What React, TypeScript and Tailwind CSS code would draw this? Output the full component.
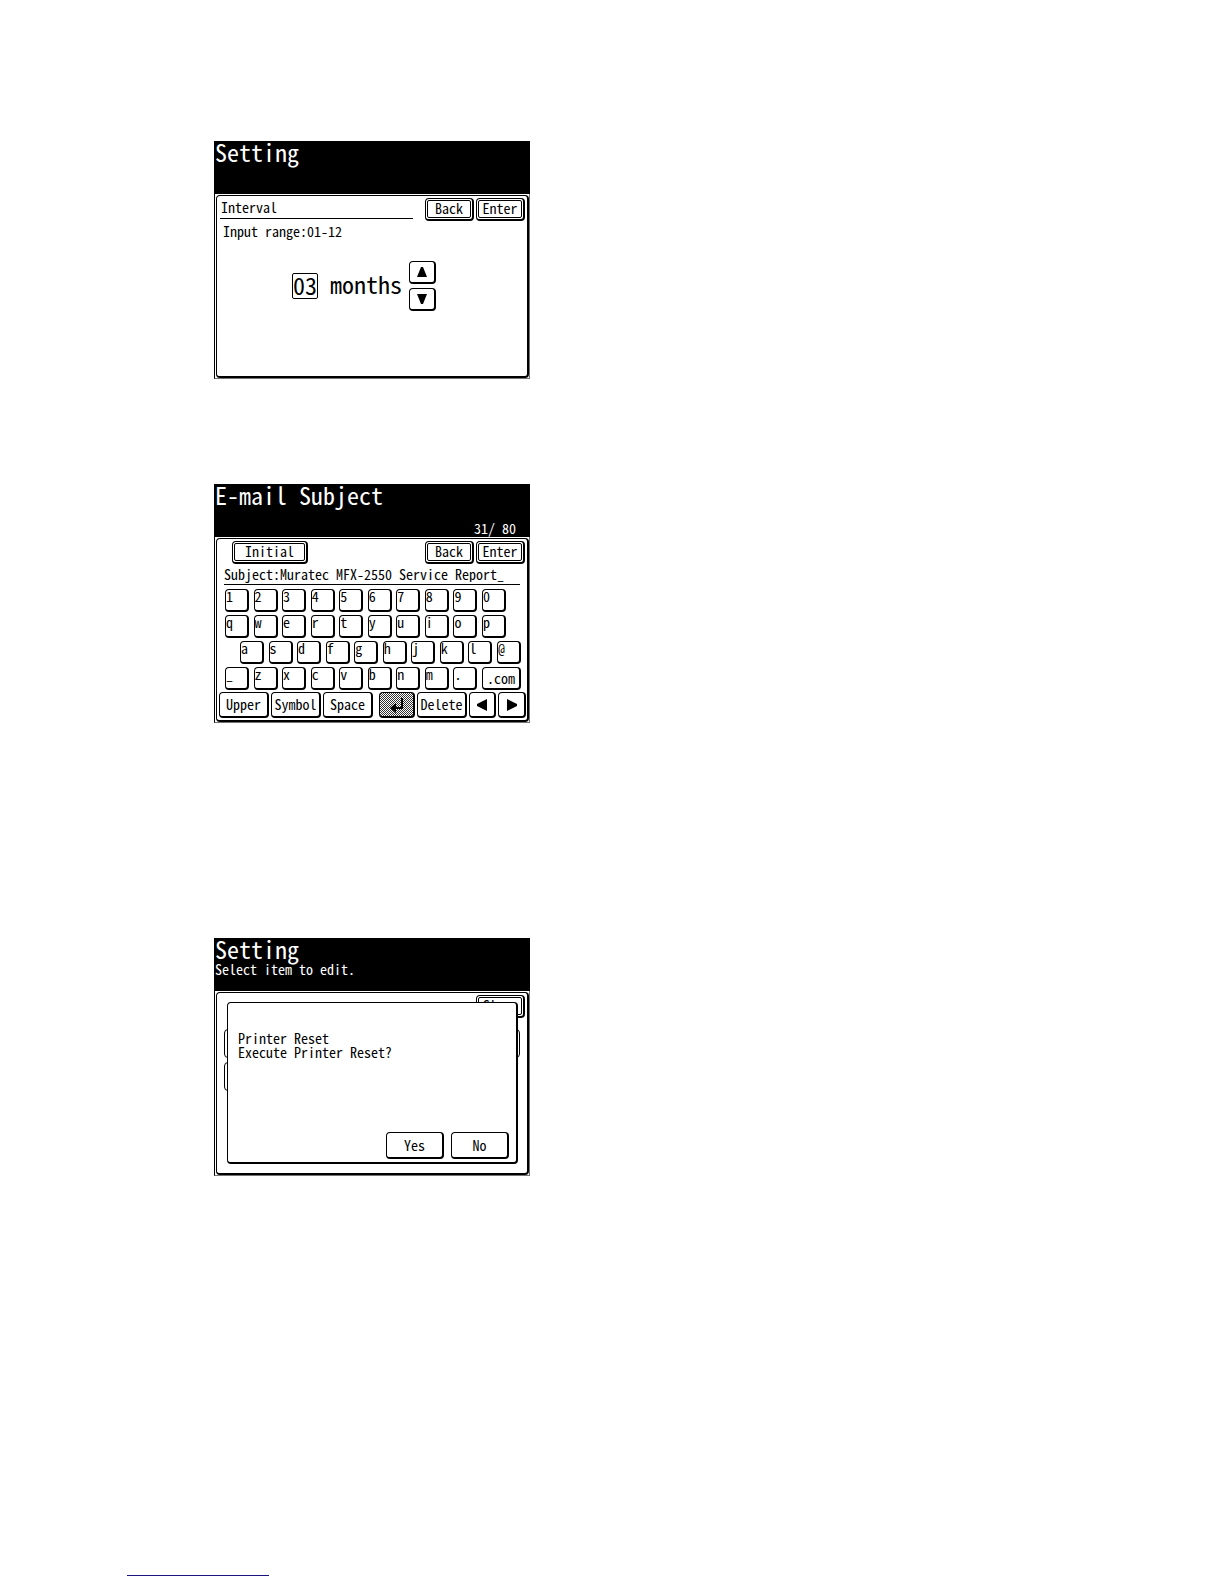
import type { ReactNode } from "react";

function Screen({
  title,
  subtitle,
  counter,
  children,
}: {
  title: string;
  subtitle?: string;
  counter?: string;
  children: ReactNode;
}) {
  return (
    <section className="w-full max-w-[316px] border-b border-l border-b-neutral-500 border-l-black bg-white">
      <header className="flex h-[53px] flex-col bg-black text-white">
        <h2 className="h-[24px] text-[24px] leading-[22px]">{title}</h2>
        {subtitle && <p className="leading-[14px]">{subtitle}</p>}
        {counter && <p className="mt-[12px] pr-[14px] text-right leading-[16px] whitespace-pre">{counter}</p>}
      </header>
      <div className="border-r border-neutral-500 pt-px pl-px">
        <div className="relative flex min-h-[183px] flex-col rounded-[4px] border border-r-2 border-b-2 border-black">
          {children}
        </div>
      </div>
    </section>
  );
}

function FramedButton({ children, wide }: { children: ReactNode; wide?: boolean }) {
  return (
    <button
      type="button"
      className={
        "flex h-[23px] rounded-[4px] border border-r-2 border-b-2 border-black bg-white p-px leading-[16px] " +
        (wide ? "w-[76px]" : "w-[49px]")
      }
    >
      <span className="flex h-full w-full items-center justify-center rounded-[2px] border border-black pb-[2px]">
        {children}
      </span>
    </button>
  );
}

const keyBase = "rounded-[4px] border border-r-2 border-b-2 border-black ";

function Key({ children }: { children: ReactNode }) {
  return (
    <button
      type="button"
      className={keyBase + "flex h-[23px] w-6 items-start justify-start bg-white leading-[12px]"}
    >
      {children}
    </button>
  );
}

function PlainButton({ children, className, label }: { children: ReactNode; className: string; label?: string }) {
  return (
    <button type="button" aria-label={label} className={keyBase + "flex items-center justify-center " + className}>
      {children}
    </button>
  );
}

function Triangle({ points }: { points: string }) {
  return (
    <svg className="shrink-0" width="12" height="12" viewBox="0 0 12 12" aria-hidden="true">
      <polygon points={points} fill="#000" />
    </svg>
  );
}

function IntervalScreen() {
  return (
    <Screen title="Setting">
      <div className="flex justify-between pt-[2px] pr-[2px] pl-[3px]">
        <h3 className="h-[21px] w-[193px] border-b border-black pl-px leading-[18px]">Interval</h3>
        <div className="flex gap-[2px]">
          <FramedButton>Back</FramedButton>
          <FramedButton>Enter</FramedButton>
        </div>
      </div>
      <p className="mt-[2px] pl-[6px] leading-[16px]">Input range:01-12</p>
      <div className="mt-[22px] flex items-center pl-[75px]">
        <input
          id="months"
          defaultValue="03"
          className="h-[26px] w-[26px] rounded-[2px] border border-black pb-[4px] text-center text-[24px] leading-[22px]"
        />
        <label htmlFor="months" className="w-[91px] pb-[4px] pl-[12px] text-[24px] leading-[24px]">
          months
        </label>
        <div className="flex flex-col gap-1">
          <PlainButton className="h-[23px] w-[27px] bg-white" label="Increase">
            <Triangle points="5,1 7,1 11,11 1,11" />
          </PlainButton>
          <PlainButton className="h-[23px] w-[27px] bg-white" label="Decrease">
            <Triangle points="5,11 7,11 11,1 1,1" />
          </PlainButton>
        </div>
      </div>
    </Screen>
  );
}

function SubjectScreen() {
  return (
    <Screen title="E-mail Subject" counter="31/ 80">
      <div className="flex justify-between pt-[2px] pr-[2px] pl-[15px]">
        <FramedButton wide>Initial</FramedButton>
        <div className="flex gap-[2px]">
          <FramedButton>Back</FramedButton>
          <FramedButton>Enter</FramedButton>
        </div>
      </div>
      <div className="mt-[2px] mr-[7px] ml-[7px] flex h-[19px] border-b border-black pb-[2px]">
        <label htmlFor="subject" className="leading-[16px]">
          Subject:
        </label>
        <input
          id="subject"
          defaultValue="Muratec MFX-2550 Service Report_"
          className="h-[16px] min-w-0 flex-1 leading-[16px]"
        />
      </div>
      <div className="mt-[4px] mr-[6px] ml-[8px] flex flex-col gap-[3px]">
        <div className="mr-[15px] flex justify-between">
          {"1234567890".split("").map((k) => (
            <Key key={k}>{k}</Key>
          ))}
        </div>
        <div className="mr-[15px] flex justify-between">
          {"qwertyuiop".split("").map((k) => (
            <Key key={k}>{k}</Key>
          ))}
        </div>
        <div className="ml-[15px] flex justify-between">
          {"asdfghjkl@".split("").map((k) => (
            <Key key={k}>{k}</Key>
          ))}
        </div>
        <div className="flex justify-between">
          {"_zxcvbnm.".split("").map((k) => (
            <Key key={k}>{k}</Key>
          ))}
          <PlainButton className="h-[23px] w-[39px] bg-white">.com</PlainButton>
        </div>
      </div>
      <div className="mt-[2px] mr-px mb-[2px] ml-[2px] flex justify-between">
        <div className="flex gap-[2px]">
          <PlainButton className="h-[26px] w-[50px] bg-white">Upper</PlainButton>
          <PlainButton className="h-[26px] w-[50px] bg-white">Symbol</PlainButton>
          <PlainButton className="h-[26px] w-[50px] bg-white">Space</PlainButton>
        </div>
        <div className="flex gap-[2px]">
          <PlainButton
            label="Return"
            className="h-[26px] w-[36px] bg-[repeating-conic-gradient(#333_0_25%,#fff_0_50%)] bg-[length:2px_2px]"
          >
            <svg className="shrink-0" width="16" height="16" viewBox="0 0 16 16" aria-hidden="true">
              <path d="M13 1V11H6" fill="none" stroke="#000" strokeWidth="2" />
              <polygon points="1,11 7,6 7,16" fill="#000" />
            </svg>
          </PlainButton>
          <PlainButton className="h-[26px] w-[50px] bg-white">Delete</PlainButton>
          <PlainButton className="h-[26px] w-[27px] bg-white" label="Left">
            <Triangle points="1,5 1,7 11,12 11,0" />
          </PlainButton>
          <PlainButton className="h-[26px] w-[28px] bg-white" label="Right">
            <Triangle points="11,5 11,7 1,12 1,0" />
          </PlainButton>
        </div>
      </div>
    </Screen>
  );
}

function ResetScreen() {
  return (
    <Screen title="Setting" subtitle="Select item to edit.">
      <div className="flex justify-end pt-[2px] pr-[2px]">
        <FramedButton>Close</FramedButton>
      </div>
      <div className="mt-[11px] mr-[7px] ml-[7px] flex flex-col gap-1">
        <div className="h-[29px] rounded-[4px] border border-black" />
        <div className="h-[29px] w-[140px] rounded-[4px] border border-black" />
      </div>
      <div
        role="dialog"
        aria-label="Printer Reset"
        className="absolute top-[9px] right-[9px] bottom-[9px] left-[10px] flex flex-col justify-between rounded-[4px] border border-r-2 border-b-2 border-black bg-white pt-[28px] pr-[7px] pb-[3px] pl-[10px]"
      >
        <p className="leading-[14px]">
          Printer Reset
          <br />
          Execute Printer Reset?
        </p>
        <div className="flex justify-end gap-[7px]">
          <PlainButton className="h-[27px] w-[58px] bg-white">Yes</PlainButton>
          <PlainButton className="h-[27px] w-[58px] bg-white">No</PlainButton>
        </div>
      </div>
    </Screen>
  );
}

export default function App() {
  return (
    <div className="flex min-h-screen flex-col justify-between bg-white font-['Noto_Sans_Mono_CJK_JP','Liberation_Mono',monospace] text-[14px] text-black">
      <main className="flex flex-col pt-[141px] pl-[214px]">
        <IntervalScreen />
        <div className="mt-[105px]">
          <SubjectScreen />
        </div>
        <div className="mt-[215px]">
          <ResetScreen />
        </div>
      </main>
      <footer className="mb-2 ml-[127px] w-[142px] border-b border-[#1a1480]" />
    </div>
  );
}
